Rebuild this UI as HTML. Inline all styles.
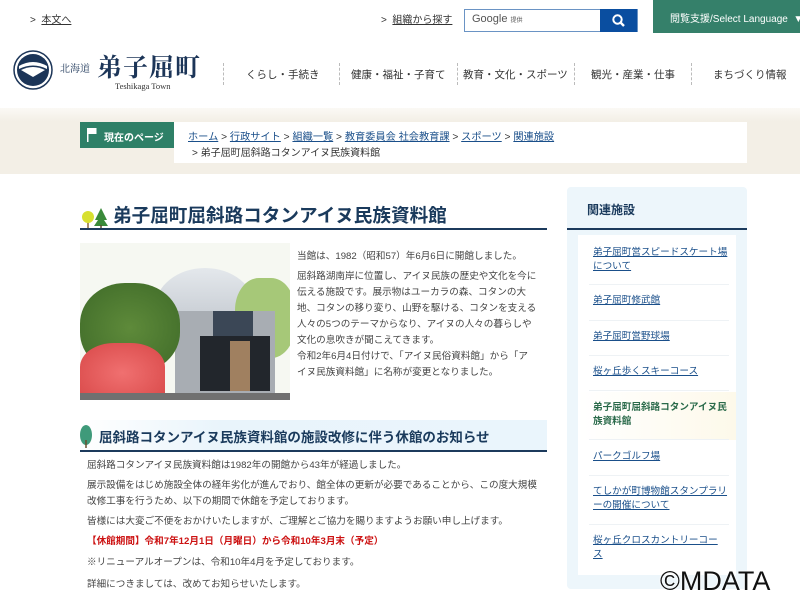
<!DOCTYPE html>
<html><head><meta charset="utf-8"><style>
*{margin:0;padding:0;box-sizing:border-box}
body{width:800px;height:600px;overflow:hidden;background:#fff;font-family:"Liberation Sans","Noto Sans CJK JP",sans-serif;color:#333;position:relative}
.a{position:absolute;white-space:nowrap}
a,.u{color:#1a4f8a;text-decoration:underline}
.nav{font-size:10.5px;color:#333;top:67px}
.div{position:absolute;top:63px;height:22px;border-left:1px dashed #bbb}
.p{font-size:9.6px;line-height:16px;color:#444}
.side{font-size:9.6px;color:#1a4f8a;text-decoration:underline;line-height:14px}
.sep{position:absolute;left:589px;width:140px;border-top:1px solid #eef2f5}
</style></head><body>
<div class="a" style="left:30px;top:11px;font-size:10px">&gt;&nbsp;&nbsp;<span class="u" style="color:#333">本文へ</span></div>
<div class="a" style="left:381px;top:11px;font-size:10px">&gt;&nbsp;&nbsp;<span class="u" style="color:#333">組織から探す</span></div>
<div class="a" style="left:464px;top:9px;width:174px;height:23px;border:1px solid #6a93c4;background:#fff"></div>
<div class="a" style="left:472px;top:13px;font-size:11px;color:#555">Google <span style="font-size:6px">提供</span></div>
<div class="a" style="left:600px;top:9px;width:37px;height:23px;background:#0a4ea0"></div>
<svg class="a" style="left:611px;top:13px" width="16" height="16"><circle cx="6.5" cy="6.5" r="4.2" fill="none" stroke="#fff" stroke-width="2"/><line x1="9.5" y1="9.5" x2="13" y2="13" stroke="#fff" stroke-width="2.4"/></svg>
<div class="a" style="left:653px;top:0;width:147px;height:33px;background:#35806a"></div>
<div class="a" style="left:670px;top:10px;font-size:10px;color:#fff">閲覧支援/Select Language &nbsp;▼</div>
<svg class="a" style="left:13px;top:50px" width="40" height="40"><circle cx="20" cy="20" r="19" fill="#fff" stroke="#1c3558" stroke-width="1.5"/><circle cx="20" cy="20" r="16" fill="#1c3558"/><path d="M6 16 Q20 8 34 16 L34 19 Q20 12 6 19Z" fill="#fff"/><path d="M8 20 Q20 14 32 20 L20 27Z" fill="#fff"/></svg>
<div class="a" style="left:60px;top:60px;font-size:10px;font-family:'Noto Serif CJK SC',serif;color:#1c3558">北海道</div>
<div class="a" style="left:97px;top:48px;font-size:25px;font-family:'Noto Serif CJK SC',serif;color:#1c3558;letter-spacing:1px;font-weight:bold">弟子屈町</div>
<div class="a" style="left:115px;top:81px;font-size:8.5px;font-family:'Liberation Serif',serif;color:#333">Teshikaga Town</div>
<div class="div" style="left:223px"></div><div class="div" style="left:339px"></div><div class="div" style="left:457px"></div><div class="div" style="left:574px"></div><div class="div" style="left:691px"></div>
<div class="a nav" style="left:246px">くらし・手続き</div>
<div class="a nav" style="left:351px">健康・福祉・子育て</div>
<div class="a nav" style="left:463px">教育・文化・スポーツ</div>
<div class="a nav" style="left:591px">観光・産業・仕事</div>
<div class="a nav" style="left:713px">まちづくり情報</div>
<div class="a" style="left:0;top:108px;width:800px;height:66px;background:linear-gradient(#fbf9f5,#f3efe6 20%)"></div>
<div class="a" style="left:80px;top:122px;width:94px;height:26px;background:#2e8067"></div>
<svg class="a" style="left:86px;top:128px" width="12" height="14"><rect x="1" y="0" width="1.5" height="14" fill="#fff"/><rect x="2.5" y="0" width="8" height="6" fill="#fff"/></svg>
<div class="a" style="left:104px;top:129px;font-size:10px;color:#fff;font-weight:bold">現在のページ</div>
<div class="a" style="left:174px;top:122px;width:573px;height:41px;background:#fff"></div>
<div class="a" style="left:188px;top:128px;font-size:10.2px;color:#333"><span class="u">ホーム</span> &gt; <span class="u">行政サイト</span> &gt; <span class="u">組織一覧</span> &gt; <span class="u">教育委員会 社会教育課</span> &gt; <span class="u">スポーツ</span> &gt; <span class="u">関連施設</span></div>
<div class="a" style="left:192px;top:144px;font-size:10px;color:#333">&gt; 弟子屈町屈斜路コタンアイヌ民族資料館</div>
<svg class="a" style="left:80px;top:205px" width="30" height="24"><line x1="8" y1="14" x2="8" y2="24" stroke="#8a6a3a" stroke-width="1.5"/><circle cx="8" cy="12" r="6" fill="#d8e030"/><polygon points="21,3 15,15 18,15 14,21 28,21 24,15 27,15" fill="#3a8a3a"/><line x1="21" y1="20" x2="21" y2="24" stroke="#5a4a2a" stroke-width="1.5"/></svg>
<div class="a" style="left:113px;top:201px;font-size:18.6px;font-weight:bold;color:#1a3a5c">弟子屈町屈斜路コタンアイヌ民族資料館</div>
<div class="a" style="left:80px;top:228px;width:467px;height:2px;background:#1c3a5c"></div>
<div class="a" style="left:80px;top:243px;width:210px;height:157px;overflow:hidden;background:#f6f8f2">
<div class="a" style="left:75px;top:25px;width:100px;height:80px;border-radius:50% 50% 0 0;background:linear-gradient(#e4e8ec,#b8bec6)"></div>
<div class="a" style="left:155px;top:35px;width:60px;height:80px;border-radius:40%;background:#a6c878"></div>
<div class="a" style="left:95px;top:68px;width:100px;height:90px;background:#a8adb3"></div>
<div class="a" style="left:133px;top:68px;width:40px;height:25px;background:#3b4756"></div>
<div class="a" style="left:120px;top:93px;width:70px;height:55px;background:#22262c"></div>
<div class="a" style="left:150px;top:98px;width:20px;height:50px;background:#a08060"></div>
<div class="a" style="left:0;top:40px;width:100px;height:90px;border-radius:45%;background:radial-gradient(#5e8a3a,#3e6a28)"></div>
<div class="a" style="left:0;top:100px;width:85px;height:60px;border-radius:40% 40% 0 0;background:radial-gradient(#f07070,#d84848)"></div>
<div class="a" style="left:0;top:150px;width:210px;height:8px;background:#707070"></div>
</div>
<div class="a p" style="left:297px;top:249px">当館は、1982（昭和57）年6月6日に開館しました。</div>
<div class="a p" style="left:297px;top:269px">屈斜路湖南岸に位置し、アイヌ民族の歴史や文化を今に<br>伝える施設です。展示物はユーカラの森、コタンの大<br>地、コタンの移り変り、山野を駆ける、コタンを支える<br>人々の5つのテーマからなり、アイヌの人々の暮らしや<br>文化の息吹きが聞こえてきます。</div>
<div class="a p" style="left:297px;top:349px">令和2年6月4日付けで、「アイヌ民俗資料館」から「ア<br>イヌ民族資料館」に名称が変更となりました。</div>
<div class="a" style="left:80px;top:420px;width:467px;height:32px;background:linear-gradient(90deg,#fff,#e9f4fb 30%,#eaf5fc);border-bottom:2px solid #1c3a5c"></div>
<svg class="a" style="left:79px;top:424px" width="14" height="24"><ellipse cx="7" cy="11" rx="6" ry="10" fill="#3f9a7a"/><line x1="7" y1="16" x2="7" y2="24" stroke="#6a5030" stroke-width="1.5"/></svg>
<div class="a" style="left:99px;top:426px;font-size:13.5px;font-weight:bold;color:#1a3a5c">屈斜路コタンアイヌ民族資料館の施設改修に伴う休館のお知らせ</div>
<div class="a p" style="left:87px;top:458px">屈斜路コタンアイヌ民族資料館は1982年の開館から43年が経過しました。</div>
<div class="a p" style="left:87px;top:478px">展示設備をはじめ施設全体の経年劣化が進んでおり、館全体の更新が必要であることから、この度大規模<br>改修工事を行うため、以下の期間で休館を予定しております。</div>
<div class="a p" style="left:87px;top:514px">皆様には大変ご不便をおかけいたしますが、ご理解とご協力を賜りますようお願い申し上げます。</div>
<div class="a p" style="left:87px;top:534px;color:#cc1111;font-weight:bold">【休館期間】令和7年12月1日（月曜日）から令和10年3月末（予定）</div>
<div class="a p" style="left:87px;top:555px">※リニューアルオープンは、令和10年4月を予定しております。</div>
<div class="a p" style="left:87px;top:577px">詳細につきましては、改めてお知らせいたします。</div>
<div class="a" style="left:567px;top:187px;width:180px;height:402px;background:#edf6fb;border-radius:4px"></div>
<div class="a" style="left:587px;top:201px;font-size:12px;font-weight:bold;color:#1a3a5c">関連施設</div>
<div class="a" style="left:567px;top:228px;width:180px;height:2px;background:#1c3a5c"></div>
<div class="a" style="left:578px;top:235px;width:158px;height:340px;background:#fff"></div>
<div class="a" style="left:578px;top:392px;width:158px;height:48px;background:linear-gradient(90deg,#fff,#fdf9ea)"></div>
<div class="a side" style="left:593px;top:246px">弟子屈町営スピードスケート場<br>について</div>
<div class="sep" style="top:284px"></div>
<div class="a side" style="left:593px;top:294px">弟子屈町修武館</div>
<div class="sep" style="top:320px"></div>
<div class="a side" style="left:593px;top:330px">弟子屈町営野球場</div>
<div class="sep" style="top:355px"></div>
<div class="a side" style="left:593px;top:365px">桜ヶ丘歩くスキーコース</div>
<div class="sep" style="top:390px"></div>
<div class="a side" style="left:593px;top:401px;color:#2a6a4a;font-weight:bold;text-decoration:none">弟子屈町屈斜路コタンアイヌ民<br>族資料館</div>
<div class="sep" style="top:439px"></div>
<div class="a side" style="left:593px;top:450px">パークゴルフ場</div>
<div class="sep" style="top:475px"></div>
<div class="a side" style="left:593px;top:485px">てしかが町博物館スタンプラリ<br>ーの開催について</div>
<div class="sep" style="top:524px"></div>
<div class="a side" style="left:593px;top:534px">桜ヶ丘クロスカントリーコー<br>ス</div>
<div class="a" style="left:660px;top:566px;font-size:27px;color:#111;text-shadow:0 0 2px #fff,0 0 2px #fff">©MDATA</div>
</body></html>
